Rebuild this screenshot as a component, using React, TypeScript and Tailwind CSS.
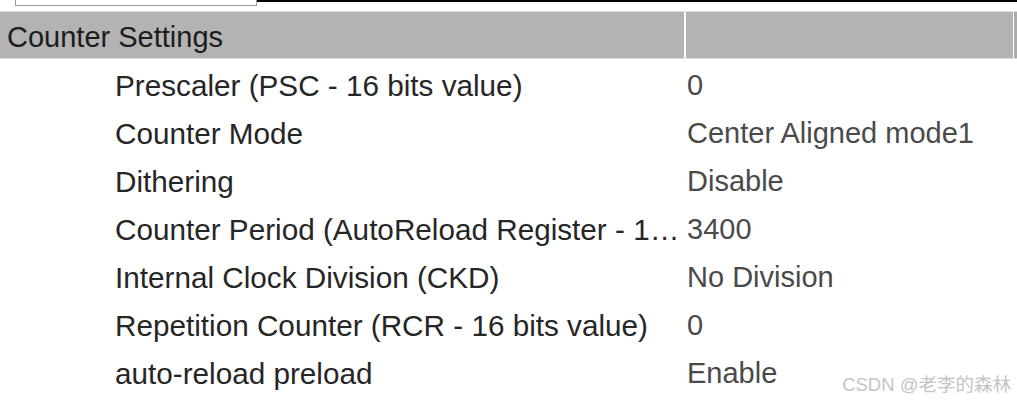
const rows: [string, string][] = [
  ["Prescaler (PSC - 16 bits value)", "0"],
  ["Counter Mode", "Center Aligned mode1"],
  ["Dithering", "Disable"],
  ["Counter Period (AutoReload Register - 16 bits value )", "3400"],
  ["Internal Clock Division (CKD)", "No Division"],
  ["Repetition Counter (RCR - 16 bits value)", "0"],
  ["auto-reload preload", "Enable"],
];

export default function App() {
  return (
    <div className="relative w-[1017px] h-[402px] overflow-hidden bg-white font-['Liberation_Sans',Arial,sans-serif]">
      {/* top strip: tail of a box above, and a dark rule */}
      <div className="flex h-[11px]">
        <div className="ml-[15px] w-[242px] h-[6px] border-x border-b border-[#9a9a9a]" />
        <div className="flex-1 border-t-2 border-black" />
      </div>

      <div className="border-y border-[#dedede] flex h-[48px]">
        <div className="w-[684px] bg-[#b3b3b3] flex items-center pl-[7px] text-[29px] text-[#1c1c1c] leading-normal pt-[6px]">
          Counter Settings
        </div>
        <div className="w-[2px] bg-white" />
        <div className="w-[327px] bg-[#b3b3b3]" />
        <div className="w-px bg-white" />
        <div className="flex-1 bg-[#ababab]" />
      </div>

      <div className="flex flex-col pt-[3px]">
        {rows.map(([label, value]) => (
          <div key={label} className="flex h-[48px] items-center text-[29.7px] leading-normal">
            <div className="w-[684px] pl-[115px] pr-[1px] truncate text-[#262626]">{label}</div>
            <div className="pl-[3px] text-[#4a4a4a] whitespace-nowrap text-[29px]">{value}</div>
          </div>
        ))}
      </div>

      <div className="absolute right-[6px] bottom-[8px] text-[18.5px] leading-none text-[#c4c4c4] font-['Liberation_Sans','Noto_Sans_CJK_SC',sans-serif]">
        CSDN @老李的森林
      </div>
    </div>
  );
}
